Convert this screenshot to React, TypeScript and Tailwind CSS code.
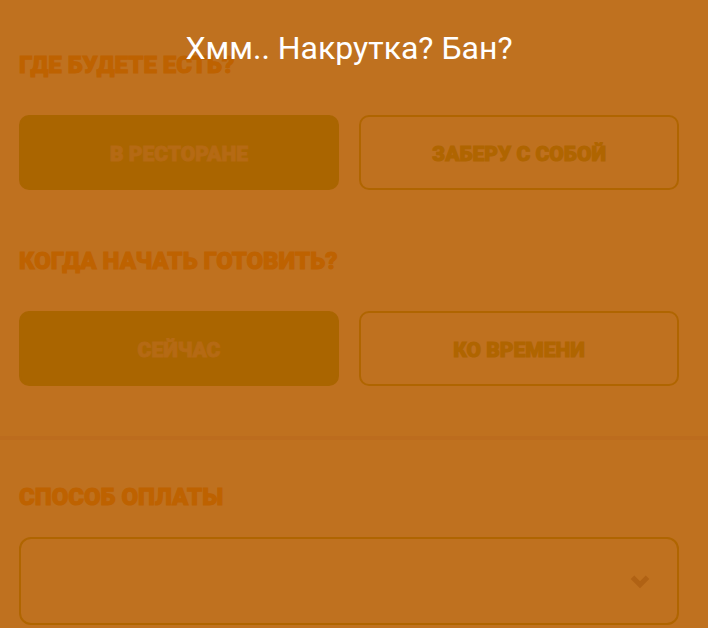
import clsx from 'clsx';
import { ChevronDown } from 'lucide-react';
import { useState } from 'react';

type Option = { value: string; label: string };

const places: Option[] = [
  { value: 'RESTAURANT', label: 'В ресторане' },
  { value: 'TAKEAWAY', label: 'Заберу с собой' },
];

const times: Option[] = [
  { value: 'NOW', label: 'Сейчас' },
  { value: 'LATER', label: 'Ко времени' },
];

const displayFont =
  "font-['Roboto',sans-serif] font-black uppercase [-webkit-text-stroke:1px_currentColor]";

function OptionGroup({
  title,
  options,
  value,
  onChange,
}: {
  title: string;
  options: Option[];
  value: string;
  onChange: (value: string) => void;
}) {
  return (
    <section>
      <h2 className={clsx(displayFont, 'text-2xl leading-9 text-[#be6200]')}>{title}</h2>
      <div className="mt-8 grid grid-cols-2 gap-5">
        {options.map((option) => (
          <button
            aria-pressed={value === option.value}
            className={clsx(
              displayFont,
              'h-[75px] rounded-[10px] border-2 pt-0.5 text-[21px] leading-7',
              value === option.value
                ? 'border-[#aa6500] bg-[#aa6500] text-[#b56a14]'
                : 'border-[#b06500] text-[#b06500]',
            )}
            key={option.value}
            onClick={() => onChange(option.value)}
            type="button"
          >
            {option.label}
          </button>
        ))}
      </div>
    </section>
  );
}

export default function App() {
  const [place, setPlace] = useState('RESTAURANT');
  const [time, setTime] = useState('NOW');

  return (
    <main className="relative min-h-screen bg-[#bf711f]">
      <div className="flex flex-col gap-[53px] pb-[50px] pl-[19px] pr-[29px] pt-[47px]">
        <OptionGroup
          onChange={setPlace}
          options={places}
          title="Где будете есть?"
          value={place}
        />
        <OptionGroup
          onChange={setTime}
          options={times}
          title="Когда начать готовить?"
          value={time}
        />
      </div>

      <hr className="h-1 border-0 bg-[#bc6c1e]" />

      <section className="pl-[19px] pr-[29px] pt-[39px]">
        <label
          className={clsx(displayFont, 'block text-2xl leading-9 text-[#be6200]')}
          htmlFor="payment"
        >
          Способ оплаты
        </label>
        <div className="relative mt-[22px]">
          <select
            className="block h-[88px] w-full appearance-none rounded-[12px] border-2 border-[#b06500] bg-transparent px-6"
            id="payment"
          >
            <option value="" />
          </select>
          <ChevronDown
            className="pointer-events-none absolute right-6 top-[29px] text-[#b06214]"
            size={30}
            strokeLinecap="butt"
            strokeLinejoin="miter"
            strokeWidth={4}
          />
        </div>
      </section>

      <p
        className="absolute inset-x-0 top-0 pl-[19px] pr-[29px] pt-7 text-center font-['Roboto',sans-serif] text-[32px] leading-10 text-white"
        role="status"
      >
        Хмм.. Накрутка? Бан?
      </p>
    </main>
  );
}
